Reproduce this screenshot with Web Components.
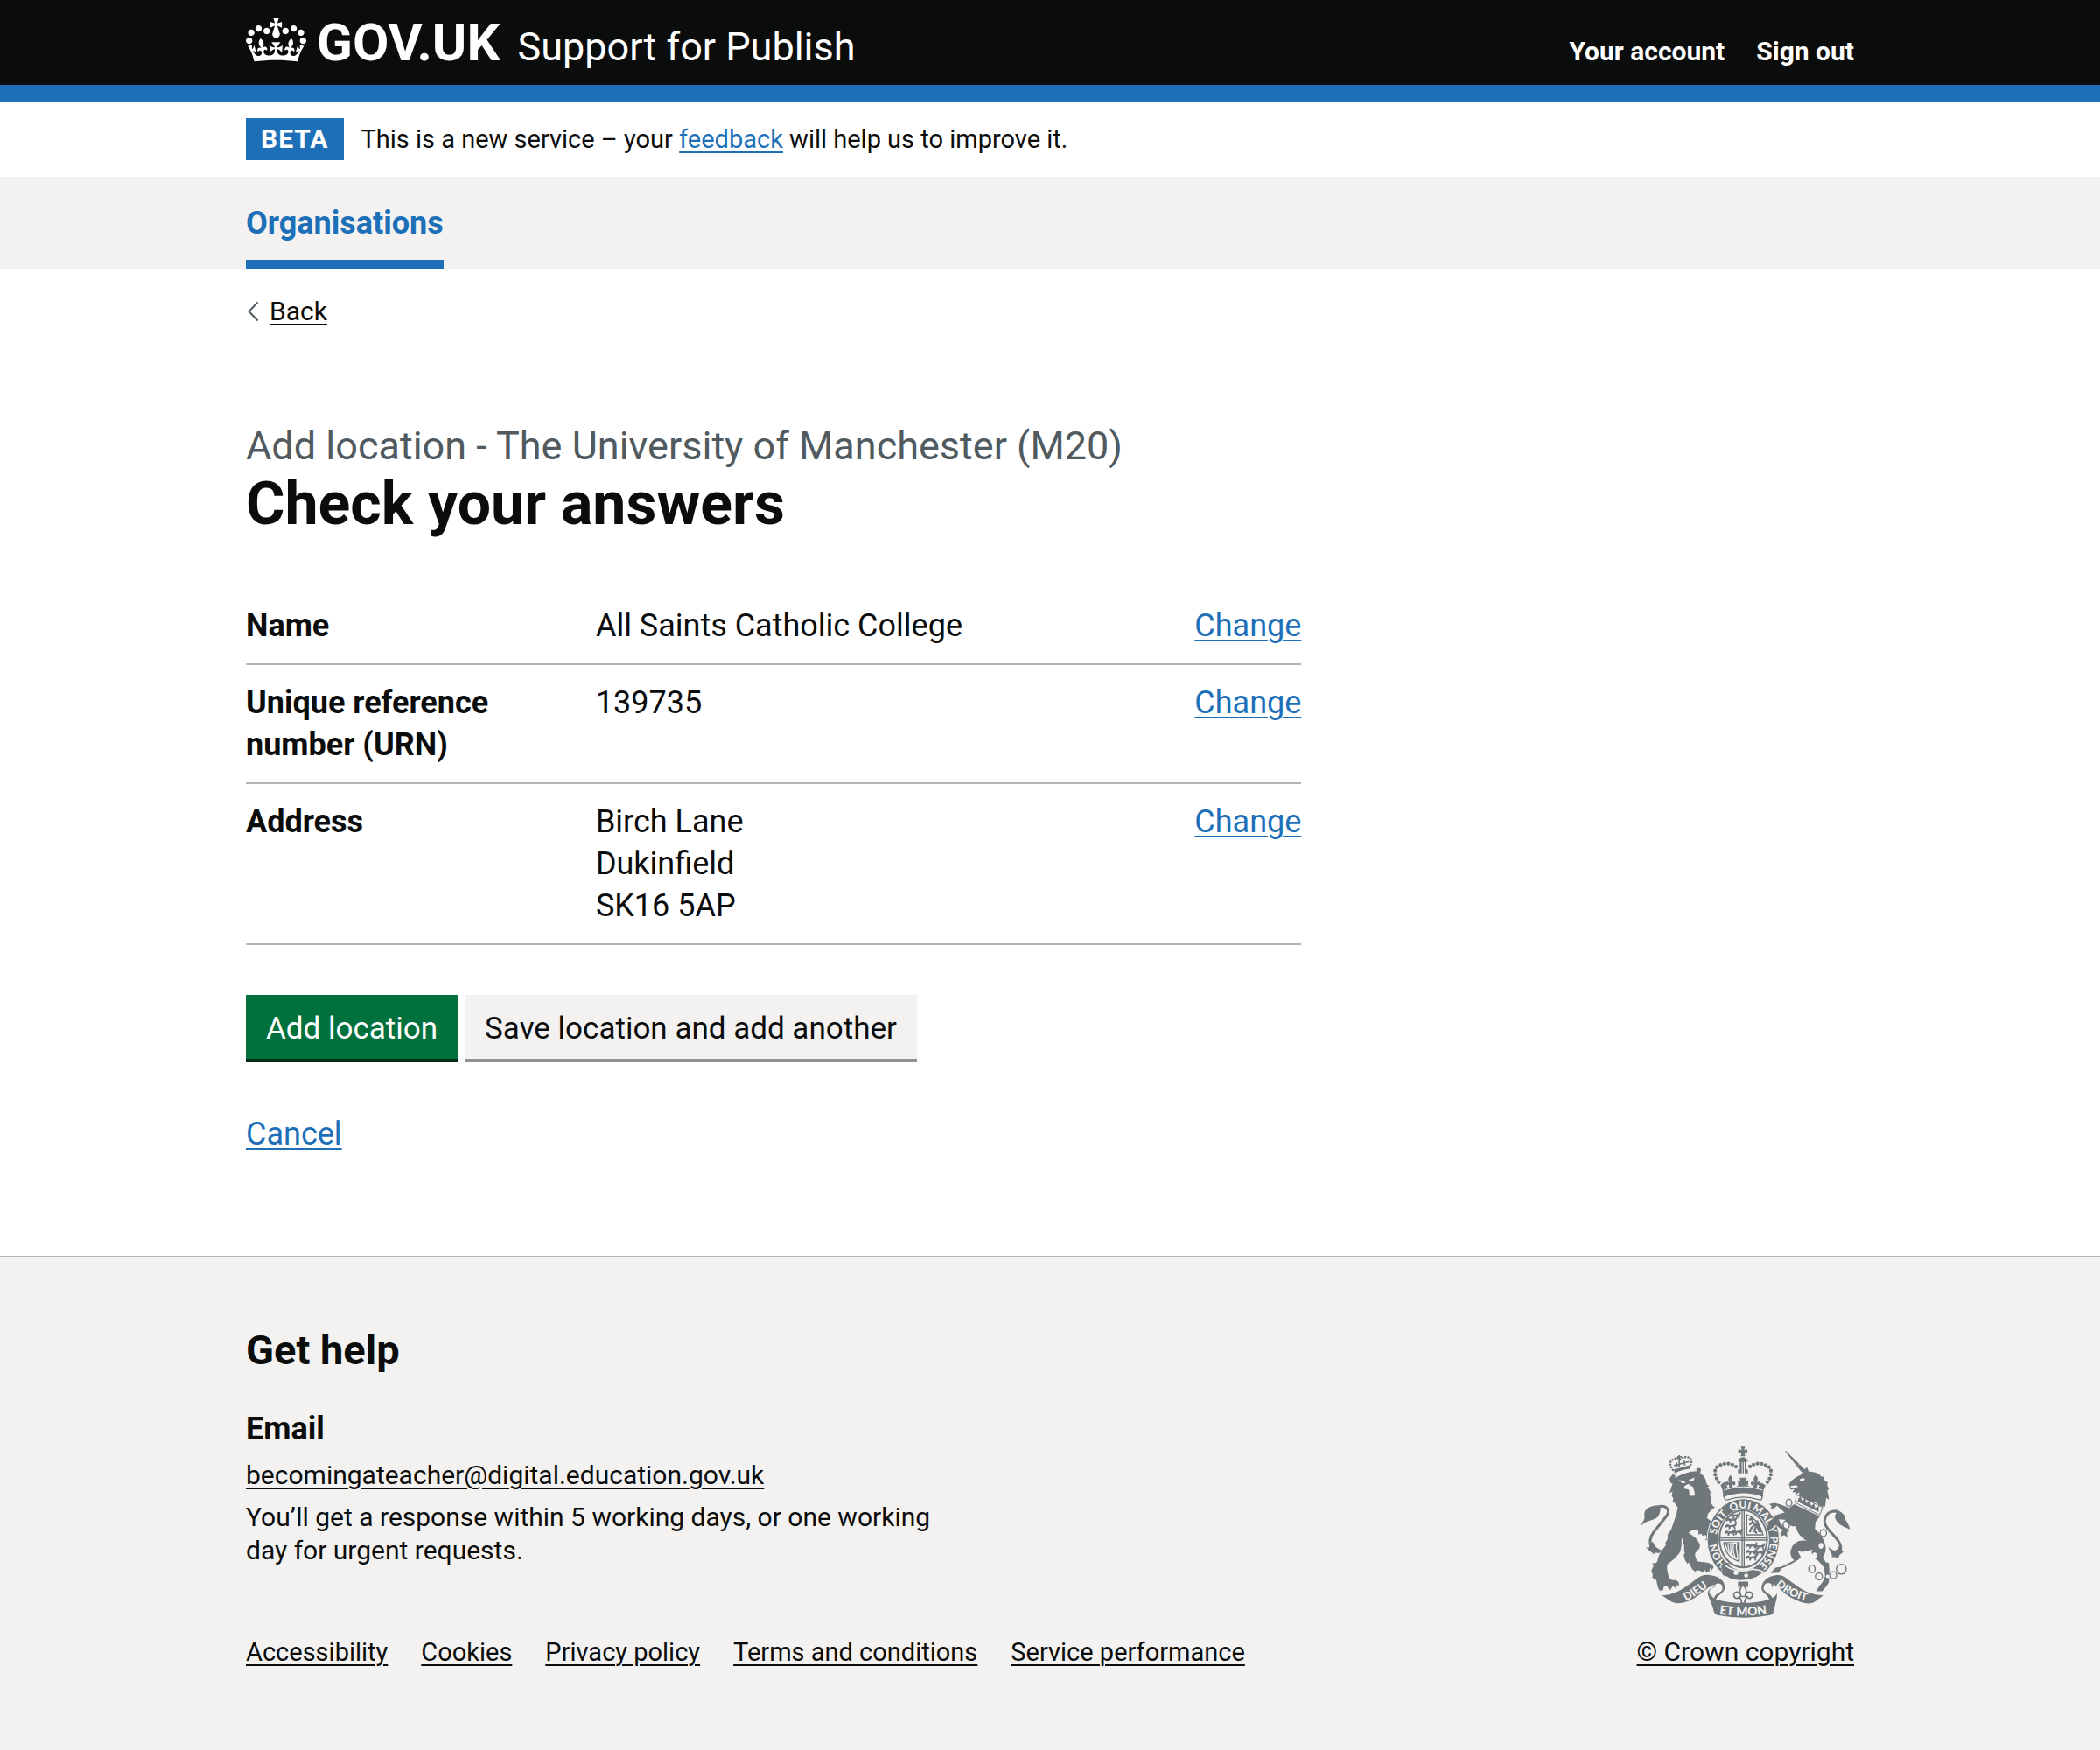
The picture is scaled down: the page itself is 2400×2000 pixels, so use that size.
<!DOCTYPE html>
<html lang="en">
<head>
<meta charset="utf-8">
<meta name="viewport" content="width=device-width, initial-scale=1">
<title>Check your answers - Support for Publish</title>
<style>
  :root {
    --ink: #0b0c0c;
    --blue: #1d70b8;
    --grey: #f3f2f1;
    --line: #b1b4b6;
    --secondary: #505a5f;
    --page: 1838px;
    --gutter: 57px;
    --body: 36px/48px Roboto, "Liberation Sans", sans-serif;
    --small: 30px/38px Roboto, "Liberation Sans", sans-serif;
    --note: 29px/38px Roboto, "Liberation Sans", sans-serif;
  }
  body { margin: 0; background: #fff; color: var(--ink); font: var(--body); }
  main { display: block; padding: 106px 0 115px; }
  page-width.gap { padding-top: 30px; }
</style>
</head>
<body>

<gov-header service="Support for Publish">
  <header-link slot="nav" href="#account">Your account</header-link>
  <header-link slot="nav" href="#signout">Sign out</header-link>
</gov-header>

<phase-banner tag="BETA">This is a new service – your <text-link href="#feedback">feedback</text-link> will help us to improve it.</phase-banner>

<primary-nav>
  <nav-item href="#organisations">Organisations</nav-item>
</primary-nav>

<page-width class="gap">
  <back-link href="#back">Back</back-link>
  <main>
    <two-thirds>
      <page-heading>
        <span slot="caption">Add location - The University of Manchester (M20)</span>
        Check your answers
      </page-heading>
      <summary-list>
        <summary-row key="Name" href="#name">All Saints Catholic College</summary-row>
        <summary-row key="Unique reference number (URN)" href="#urn">139735</summary-row>
        <summary-row key="Address" href="#address">Birch Lane<br>Dukinfield<br>SK16 5AP</summary-row>
      </summary-list>
      <button-group>
        <gov-button>Add location</gov-button>
        <gov-button secondary>Save location and add another</gov-button>
      </button-group>
      <text-link href="#cancel">Cancel</text-link>
    </two-thirds>
  </main>
</page-width>

<gov-footer>
  <footer-help slot="help"></footer-help>
  <text-link slot="link" plain href="#accessibility">Accessibility</text-link>
  <text-link slot="link" plain href="#cookies">Cookies</text-link>
  <text-link slot="link" plain href="#privacy">Privacy policy</text-link>
  <text-link slot="link" plain href="#terms">Terms and conditions</text-link>
  <text-link slot="link" plain href="#performance">Service performance</text-link>
</gov-footer>

<script>
const define = (name, html, setup) => customElements.define(name, class extends HTMLElement {
  constructor() {
    super();
    const t = document.createElement('template');
    t.innerHTML = html;
    this.attachShadow({ mode: 'open' }).append(t.content.cloneNode(true));
  }
  connectedCallback() { if (setup) setup(this, s => this.shadowRoot.querySelector(s)); }
});

define('page-width', `
  <style>
    :host { display: block; max-width: var(--page); margin: 0 auto; }
    @media (max-width: 1900px) { :host { margin: 0 30px; } }
  </style><slot></slot>`);

define('two-thirds', `
  <style>:host { display: block; width: calc((100% + var(--gutter)) * 2 / 3 - var(--gutter)); }</style>
  <slot></slot>`);

define('text-link', `
  <style>
    :host { display: inline; }
    a { color: var(--blue); text-decoration: underline; text-decoration-thickness: 2px; text-underline-offset: 4px; }
    :host([plain]) a { color: var(--ink); }
  </style><a><slot></slot></a>`,
  (el, $) => { $('a').href = el.getAttribute('href'); });

define('gov-crown', `
  <style>:host { display: block; } svg { display: block; width: 69px; height: 51px; fill: currentColor; }</style>
  <svg viewBox="0 0 132 97" aria-hidden="true"><path fill-rule="evenodd" d="M25 30.2c3.5 1.5 7.7-.2 9.1-3.7 1.5-3.6-.2-7.8-3.9-9.2-3.6-1.4-7.6.3-9.1 3.9-1.4 3.5.3 7.5 3.9 9zM9 39.5c3.6 1.5 7.8-.2 9.2-3.7 1.5-3.6-.2-7.8-3.9-9.1-3.6-1.5-7.6.2-9.1 3.8-1.4 3.5.3 7.5 3.8 9zM4.4 57.2c3.5 1.5 7.7-.2 9.1-3.8 1.5-3.6-.2-7.7-3.9-9.1-3.5-1.5-7.6.3-9.1 3.8-1.4 3.5.3 7.6 3.9 9.1zm38.3-21.4c3.5 1.5 7.7-.2 9.1-3.8 1.5-3.6-.2-7.7-3.9-9.1-3.6-1.5-7.6.3-9.1 3.8-1.3 3.6.4 7.7 3.9 9.1zm64.4-5.6c-3.6 1.5-7.8-.2-9.1-3.7-1.5-3.6.2-7.8 3.8-9.2 3.6-1.4 7.7.3 9.2 3.9 1.3 3.5-.4 7.5-3.9 9zm15.9 9.3c-3.6 1.5-7.7-.2-9.1-3.7-1.5-3.6.2-7.8 3.7-9.1 3.6-1.5 7.7.2 9.2 3.8 1.5 3.5-.3 7.5-3.8 9zm4.7 17.7c-3.6 1.5-7.8-.2-9.2-3.8-1.5-3.6.2-7.7 3.9-9.1 3.6-1.5 7.7.3 9.2 3.8 1.3 3.5-.4 7.6-3.9 9.1zM89.3 35.8c-3.6 1.5-7.8-.2-9.2-3.8-1.4-3.6.2-7.7 3.9-9.1 3.6-1.5 7.7.3 9.2 3.8 1.4 3.6-.3 7.7-3.9 9.1zM69.7 17.7l8.9 4.7V9.3l-8.9 2.8c-.2-.3-.5-.6-.9-.9L72.4 0H59.6l3.5 11.2c-.3.3-.6.5-.9.9l-8.8-2.8v13.1l8.8-4.7c.3.3.6.7.9.9l-5 15.4v.1c-.2.8-.4 1.6-.4 2.4 0 4.1 3.1 7.5 7 8.1h.2c.3 0 .7.1 1 .1.4 0 .7 0 1-.1h.2c4-.6 7.1-4.1 7.1-8.1 0-.8-.1-1.7-.4-2.4V34l-5.1-15.4c.4-.2.7-.6 1-.9zM66 92.8c16.9 0 32.8 1.1 47.1 3.2 4-16.9 8.9-26.7 14-33.5l-9.6-3.4c1 4.9 1.1 7.2 0 10.2-1.5-1.4-3-4.3-4.2-8.7L108.6 76c2.8-2 5-3.2 7.5-3.3-4.4 9.4-10 11.9-13.6 11.2-4.3-.8-6.3-4.6-5.6-7.9 1-4.7 5.7-5.9 8-.5 4.3-8.7-3-11.4-7.6-8.8 7.1-7.2 7.9-13.5 2.1-21.1-8 6.1-8.1 12.3-4.5 20.8-4.7-5.4-12.1-2.5-9.5 6.2 3.4-5.2 7.9-2 7.2 3.1-.6 4.3-6.4 7.8-13.5 7.2-10.3-.9-10.9-8-11.2-13.8 2.5-.5 7.1 1.8 11 7.3L80.2 60c-4.1 4.4-8 5.3-12.3 5.4 1.4-4.4 8-11.6 8-11.6H55.5s6.4 7.2 7.9 11.6c-4.2-.1-8-1-12.3-5.4l1.4 16.4c3.9-5.5 8.5-7.7 10.9-7.3-.3 5.8-.9 12.8-11.1 13.8-7.2.6-12.9-2.9-13.5-7.2-.7-5 3.8-8.3 7.1-3.1 2.7-8.7-4.6-11.6-9.4-6.2 3.7-8.5 3.6-14.7-4.6-20.8-5.8 7.6-5 13.9 2.2 21.1-4.7-2.6-11.9.1-7.7 8.8 2.3-5.5 7.1-4.2 8.1.5.7 3.3-1.3 7.1-5.7 7.9-3.5.7-9-1.8-13.5-11.2 2.5.1 4.7 1.3 7.5 3.3l-4.7-15.4c-1.2 4.4-2.7 7.2-4.3 8.7-1.1-3-.9-5.3 0-10.2l-9.5 3.4c5 6.9 9.9 16.7 14 33.5 14.8-2.1 30.8-3.2 47.7-3.2z"/></svg>`);

define('header-link', `
  <style>:host { display: block; } a { color: #fff; text-decoration: none; font: var(--small); font-weight: 700; }</style>
  <a><slot></slot></a>`,
  (el, $) => { $('a').href = el.getAttribute('href'); });

define('gov-header', `
  <style>
    :host { display: block; background: var(--ink); color: #fff; border-bottom: 19px solid var(--blue); }
    header { display: flex; align-items: baseline; justify-content: space-between; padding: 20px 0 11px; line-height: 57px; }
    .brand { display: flex; align-items: baseline; gap: 20px; }
    a { color: #fff; text-decoration: none; }
    .logo { display: flex; align-items: baseline; gap: 12px; font-size: 60px; font-weight: 700; }
    gov-crown { align-self: flex-start; }
    .service { font-size: 45px; }
    nav { display: flex; gap: 36px; }
  </style>
  <page-width><header>
    <div class="brand">
      <a class="logo" href="#home"><gov-crown></gov-crown><span>GOV.UK</span></a>
      <a class="service" href="#service"></a>
    </div>
    <nav aria-label="Account"><slot name="nav"></slot></nav>
  </header></page-width>`,
  (el, $) => { $('.service').textContent = el.getAttribute('service'); });

define('phase-banner', `
  <style>
    :host { display: block; }
    div { display: flex; align-items: center; gap: 20px; padding: 19px 0; }
    strong { background: var(--blue); color: #fff; font-size: 30px; line-height: 48px; padding: 0 17px; letter-spacing: 1px; }
    p { margin: 0; font: var(--note); line-height: 48px; }
  </style>
  <page-width><div><strong></strong><p><slot></slot></p></div></page-width>`,
  (el, $) => { $('strong').textContent = el.getAttribute('tag'); });

define('nav-item', `
  <style>
    :host { display: block; }
    a { display: block; padding: 29px 0 18px; border-bottom: 10px solid var(--blue); color: var(--blue); font: var(--body); font-weight: 700; text-decoration: none; }
  </style><a aria-current="page"><slot></slot></a>`,
  (el, $) => { $('a').href = el.getAttribute('href'); });

define('primary-nav', `
  <style>:host { display: block; background: var(--grey); } nav { display: flex; gap: 38px; }</style>
  <page-width><nav aria-label="Primary"><slot></slot></nav></page-width>`);

define('back-link', `
  <style>
    :host { display: flex; }
    a { display: flex; align-items: center; gap: 12px; color: var(--ink); font: var(--small); text-decoration: none; }
    span { text-decoration: underline; text-decoration-thickness: 2px; text-underline-offset: 4px; }
    svg { width: 15px; height: 24px; fill: none; stroke: var(--secondary); stroke-width: 2; }
  </style>
  <a><svg viewBox="0 0 15 24" aria-hidden="true"><path d="M13.5 1.5 3.5 12 13.5 22.5"/></svg><span><slot></slot></span></a>`,
  (el, $) => { $('a').href = el.getAttribute('href'); });

define('page-heading', `
  <style>
    :host { display: block; margin-bottom: 57px; }
    .caption { color: var(--secondary); font-size: 45px; line-height: 57px; }
    h1 { margin: 0; font-size: 68px; line-height: 77px; font-weight: 700; }
  </style>
  <div class="caption"><slot name="caption"></slot></div>
  <h1><slot></slot></h1>`);

define('summary-list', `
  <style>:host { display: block; margin-bottom: 57px; }</style>
  <slot></slot>`);

define('summary-row', `
  <style>
    :host { display: block; border-bottom: 2px solid var(--line); }
    dl, .row { display: flex; margin: 0; flex: 1; }
    dl { padding: 19px 0; }
    dt, dd { margin: 0; }
    dt { flex: 0 0 30%; padding-right: 38px; font-weight: 700; }
    .value { flex: 1; }
  </style>
  <dl><div class="row"><dt></dt><dd class="value"><slot></slot></dd><dd><text-link>Change</text-link></dd></div></dl>`,
  (el, $) => {
    $('dt').textContent = el.getAttribute('key');
    const link = $('text-link');
    link.setAttribute('href', el.getAttribute('href'));
    link.shadowRoot.querySelector('a').href = el.getAttribute('href');
  });

define('button-group', `
  <style>:host { display: flex; flex-wrap: wrap; gap: 8px; margin-bottom: 58px; }</style><slot></slot>`);

define('gov-button', `
  <style>
    :host { display: block; }
    button { display: block; border: 0; border-bottom: 4px solid #002d18; border-radius: 0; margin: 0; padding: 17px 23px 13px; background: #00703c; color: #fff; font: var(--body); font-size: 35px; line-height: 43px; cursor: pointer; }
    :host([secondary]) button { background: var(--grey); color: var(--ink); border-bottom-color: #929191; }
  </style><button type="button"><slot></slot></button>`);

define('footer-help', `
  <style>
    :host { display: block; max-width: 800px; margin-bottom: 78px; }
    h2, h3, p { margin: 0; }
    h2 { font-size: 47px; line-height: 57px; margin-bottom: 38px; }
    h3 { font: var(--body); font-weight: 700; margin-bottom: 10px; }
    p { font: var(--small); }
    p + p { margin-top: 10px; }
  </style>
  <h2>Get help</h2>
  <h3>Email</h3>
  <p><text-link plain href="mailto:becomingateacher@digital.education.gov.uk">becomingateacher@digital.education.gov.uk</text-link></p>
  <p>You’ll get a response within 5 working days, or one working day for urgent requests.</p>`);

define('royal-arms', `
  <style>
    :host { display: block; }
    svg { display: block; width: 240px; height: 198px; }
    .f { fill: #6f777b; } .w { fill: var(--grey); }
    .s { fill: none; stroke: #6f777b; } .ws { fill: none; stroke: var(--grey); }
    text { font-family: Lato, sans-serif; font-weight: 900; fill: var(--grey); text-anchor: middle; }
  </style>
  <svg viewBox="40 30 722 594" aria-hidden="true">
    <defs>
      <path id="ring" d="M393 461C345 461 300 412 300 353S345 245 393 245 486 294 486 353 441 461 393 461"/>
      <path id="dieu" d="M181 569Q222 555 284 504"/>
      <path id="mon" d="M303 607Q393 622 482 607"/>
      <path id="droit" d="M496 502Q546 550 620 567"/>
      <g id="fleur"><path d="M0-23C-9-13-9-8-3 5-9-6-21-2-16 9-14 14-8 12-7 8-5 13-3 15-3 20H3C3 15 5 13 7 8 8 12 14 14 16 9 21-2 9-6 3 5 9-8 9-13 0-23Z"/></g>
      <g id="pass"><path d="M0 3 7 0 13 4 24 3 31 0 33-5 38-3 36 4 32 9 34 17 29 18 27 11 17 10 15 17 9 18 10 11 5 10 0 13-2 8Z"/></g>
    </defs>

    <!-- lion: tail, body, limbs, face, crown -->
    <path class="s" stroke-width="9" d="M98 240C130 231 144 251 128 273L85 327C70 347 70 365 78 382"/>
    <path class="f" d="M42 305C45 290 57 285 53 270 51 255 61 246 73 240 85 234 99 234 109 237 108 255 106 274 90 281 72 288 56 289 42 305ZM57 377C67 385 75 380 69 363L83 361C88 375 94 383 117 391 108 394 105 397 104 399 93 396 88 397 84 403 79 394 68 392 57 377Z"/>
    <path class="f" d="M139 142 151 128 163 134 232 111 240 105 248 110 245 124C260 134 265 146 267 161L277 170 270 171 286 196 277 193 284 214 281 225C287 234 289 241 297 240L287 247 272 263 268 279C282 286 294 300 299 318L303 360 303 370 293 365 291 374 281 362 275 366 271 354 262 355 268 345 264 337 252 339 250 332 239 335 239 322 220 319 204 329C225 341 240 354 244 371 246 385 231 392 228 400 226 409 231 422 238 428L263 431C276 432 288 437 291 447L284 459 278 449 276 466 263 462 262 456 253 466 246 460 232 457 230 464 218 455 205 430 202 437 193 424 188 405 190 374 184 353 178 388C174 405 150 424 137 433 128 440 131 455 134 470 137 486 143 492 157 492 168 493 174 499 172 513L166 507 162 520 151 512 142 526 131 513 120 514 117 527 105 528 99 515 94 492 80 483 82 473 77 460 85 441 79 434 91 434 98 427C101 403 112 390 127 372L125 364 133 350 133 335 145 319 163 265 168 243 157 226 150 222 153 211 147 202 150 187 139 193 146 171 150 161 143 157Z"/>
    <path class="w" d="M171 148 190 150 194 157 185 160ZM202 150 226 138 222 151 210 153ZM190 169 204 161 220 171 224 184 227 196C225 205 207 205 207 193L207 182 197 178 191 178Z"/>
    <path class="ws" stroke-width="5" d="M184 349C181 365 185 385 190 402M159 138Q195 116 234 115"/>
    <path class="f" d="M155 111 211 96 211 109Q180 112 157 125Z"/>
    <g class="s" stroke-width="5"><path stroke-width="8" stroke-dasharray="0 10" stroke-linecap="round" d="M151 113C136 95 142 75 155 78Q164 66 174 78 188 64 207 71C218 78 217 93 207 101"/><path d="M173 62V101M166 68H181M163 87 166 105M190 81 192 98M155 98 207 84"/></g>

    <!-- imperial crown -->
    <path class="f" d="M385 33H399L396 45 407 41V56L397 53 400 66H384L388 53 376 56V41L388 45ZM375 84Q377 71 392 69 407 71 409 84H403V112L409 111V125H375V111L381 112V84ZM315 165 326 155 335 165 341 176 351 162 359 174 379 166 385 153 382 144H402L399 153 405 166 424 174 432 162 443 176 455 157 470 165C460 185 461 192 462 206Q393 180 323 207C325 190 322 180 315 165Z"/>
    <path class="w" d="M388 86H391V137H388ZM395 86H398V137H395Z"/>
    <path class="s" stroke-width="13" stroke-linecap="round" stroke-dasharray="0 14" d="M309 155C289 127 293 104 313 97 333 88 350 89 370 103M476 155C496 127 491 104 471 97 451 88 434 89 414 103"/>
    <use class="f" href="#fleur" x="349" y="154"/><use class="f" href="#fleur" x="436" y="154"/>
    <path class="f" d="M380 140H405L400 154 410 147V167L399 161 404 174H381L386 161 375 167V147L387 154Z"/>
    <path class="ws" stroke-width="3" d="M327 182Q393 160 459 182"/>
    <path class="s" stroke-width="4" d="M329 201C326 212 331 219 340 215Q393 198 447 215C455 219 460 212 456 201"/>

    <!-- garter and shield -->
    <ellipse class="f" cx="393" cy="353" rx="124" ry="141" stroke="#f3f2f1" stroke-width="3"/>
    <ellipse class="w" cx="393" cy="353" rx="89" ry="105"/>
    <ellipse class="f" cx="393" cy="350" rx="85" ry="101"/>
    <ellipse class="w" cx="393" cy="350" rx="79" ry="95"/>
    <path class="s" stroke-width="4" d="M389 250V448M396 250V448M308 347H478M308 354H478"/>
    <path class="f" d="M324 361H381V430C344 420 326 394 324 361Z"/>
    <path class="ws" stroke-width="4" d="M331 368 371 363M332 371C337 395 350 415 374 421M372 365C363 380 375 391 374 421M341 370Q341 393 353 406M350 369Q347 395 361 414M360 368Q354 394 368 419"/>
    <g class="f"><use href="#pass" x="336" y="277"/><use href="#pass" x="333" y="299"/><use href="#pass" x="330" y="321"/><use href="#pass" x="347" y="262"/><use href="#pass" x="355" y="319"/><use href="#pass" x="404" y="366"/><use href="#pass" x="404" y="387"/><use href="#pass" x="404" y="407"/><use href="#pass" x="431" y="369"/><use href="#pass" x="429" y="390"/></g>
    <path class="s" stroke-width="4" d="M405 267Q446 282 461 336H405Z"/>
    <path class="s" stroke-width="7" d="M413 285 422 279 426 292 439 302 449 326M426 292 414 302M435 301 422 311 415 327M437 307 431 323 440 330M451 328C457 310 438 300 442 286"/>
    <path class="f" d="M281 300 299 318 306 366 297 372 290 366 279 362 272 356Z"/>
    <text font-size="34"><textPath href="#ring" startOffset="104">HON</textPath></text>
    <text font-size="36"><textPath href="#ring" startOffset="215">SOIT</textPath></text>
    <text font-size="36"><textPath href="#ring" startOffset="304">QUI</textPath></text>
    <text font-size="36"><textPath href="#ring" startOffset="397">MAL Y</textPath></text>
    <text font-size="36"><textPath href="#ring" startOffset="515">PENSE</textPath></text>
    <path class="f" stroke="#f3f2f1" stroke-width="5" d="M327 437C345 458 391 466 424 454L449 458 463 464C441 493 367 507 331 478 319 464 317 447 327 437Z"/>
    <path class="s" stroke-width="7" d="M344 437C321 430 318 448 325 458 318 473 335 480 346 470"/>
    <circle class="w" cx="368" cy="466" r="8"/><circle class="w" cx="403" cy="476" r="7"/>

    <!-- unicorn: horn, head, mane, body, legs, tail, chain -->
    <path class="f" d="M536 48 541 49 603 110 607 114 594 121Z"/>
    <path class="ws" stroke-width="2" d="M555 65 559 61M568 81 574 75M581 98 588 91"/>
    <path class="f" d="M599 117 612 103 618 119C640 119 655 126 661 136L671 137 669 146 684 157 681 164 687 179 682 184 688 215 678 209 674 239 657 238 646 226 618 221 584 204 586 189 571 200 574 189 562 189 568 179 555 180 550 163C555 151 568 143 578 136L590 131Z"/>
    <path class="w" d="M586 146 599 140 605 146 597 153 590 151ZM551 170 575 165 581 171 565 176Z"/>
    <path class="w" stroke="#6f777b" stroke-width="3" d="M576 198 666 242 655 268 571 225Z"/>
    <path class="f" d="M582 213 589 203 595 219 605 211 610 227 620 219 627 237 637 227 640 244 653 237 652 257 579 222Z"/>
    <path class="f" d="M568 231 656 273 642 291 639 315C659 333 671 350 675 373 680 393 671 405 667 413L676 430 687 433 689 456 687 500 677 515 664 530 643 530 653 514 666 498 674 478 671 449 650 425C633 415 625 401 629 386 614 394 593 397 580 392L591 413C579 427 553 440 524 452L515 466 486 468 504 449 524 446 568 424C554 411 552 395 559 382 567 361 586 352 612 357 588 343 576 326 574 306 558 309 546 302 536 284L515 283 521 297 538 313 552 324 543 327 545 344 533 337 525 341 520 331 529 320 513 309 503 299 496 285 500 270 535 259 519 245 509 235 500 244 486 246 491 238 482 230 500 226C519 231 536 236 550 244Z"/>
    <path class="s" stroke-width="9" d="M725 398C735 372 720 356 703 337 677 310 664 294 678 270 688 255 699 254 716 255"/>
    <path class="f" d="M696 254C710 246 731 254 741 270 739 286 754 291 760 317 741 309 720 303 710 282 706 271 709 266 714 261ZM685 377C694 388 709 395 716 386L723 373 733 376C730 387 732 396 739 393L724 405 719 417 709 413 697 413C701 403 689 393 685 377Z"/>
    <g class="s" stroke-width="4"><ellipse cx="550" cy="226" rx="10" ry="12"/><ellipse cx="541" cy="302" rx="11" ry="14"/><ellipse cx="668" cy="330" rx="11" ry="12"/><ellipse cx="629" cy="453" rx="11" ry="13"/><ellipse cx="653" cy="479" rx="12" ry="12"/><ellipse cx="702" cy="475" rx="12" ry="12"/><circle cx="730" cy="454" r="17"/></g>
    <ellipse class="w" cx="660" cy="374" rx="8" ry="10"/><ellipse class="w" cx="638" cy="407" rx="8" ry="10"/><circle class="w" cx="683" cy="479" r="6"/>

    <!-- scroll and plant badge -->
    <path class="f" d="M114 544C166 544 203 508 236 485 253 473 270 472 284 476 315 480 335 501 328 525 321 541 304 543 299 559Q393 583 482 559C479 541 462 540 456 523 453 501 473 479 504 475 533 470 547 492 574 509 604 532 632 543 668 544L637 568Q625 574 604 571C566 560 540 544 515 517L496 506C492 516 490 522 507 532 513 548 504 563 500 590Q499 609 483 613 393 629 303 612 291 607 290 592C281 559 270 549 271 532 276 517 295 520 294 507L272 518C238 546 213 566 177 571 157 574 140 563 114 544Z"/>
    <path class="w" d="M297 507C313 496 325 511 321 524 315 537 298 536 292 554 280 542 271 534 279 525 286 518 299 518 297 507ZM490 505C475 495 462 507 463 522 468 536 486 537 493 553 507 544 514 535 506 526 500 519 488 519 490 505Z"/>
    <text font-size="38"><textPath href="#dieu" startOffset="50%">DIEU</textPath></text>
    <text font-size="42"><textPath href="#mon" startOffset="50%">ET MON</textPath></text>
    <text font-size="38"><textPath href="#droit" startOffset="50%">DROIT</textPath></text>
    <path class="f" d="M375 497H410V515H375Z"/>
    <path class="w" stroke="#6f777b" stroke-width="5" d="M392 508C378 523 379 535 386 546 380 527 358 529 361 546 364 558 378 556 379 547 381 558 390 556 386 567L393 573 399 567C395 556 404 558 406 547 407 556 421 558 424 546 427 529 405 527 399 546 406 535 407 523 392 508Z"/>
    <path class="s" stroke-width="4" d="M377 548H409"/>
  </svg>`);

define('gov-footer', `
  <style>
    :host { display: block; background: var(--grey); border-top: 2px solid var(--line); font: var(--small); }
    footer { padding: 77px 0 95px; display: flex; align-items: flex-end; justify-content: space-between; gap: 57px; }
    .links { display: flex; flex-wrap: wrap; gap: 10px 38px; font: var(--note); }
    .copyright { display: flex; flex-direction: column; align-items: center; gap: 19px; }
  </style>
  <page-width><footer>
    <div><slot name="help"></slot><nav class="links" aria-label="Support links"><slot name="link"></slot></nav></div>
    <div class="copyright"><royal-arms></royal-arms><text-link plain href="#copyright">© Crown copyright</text-link></div>
  </footer></page-width>`);
</script>
</body>
</html>
